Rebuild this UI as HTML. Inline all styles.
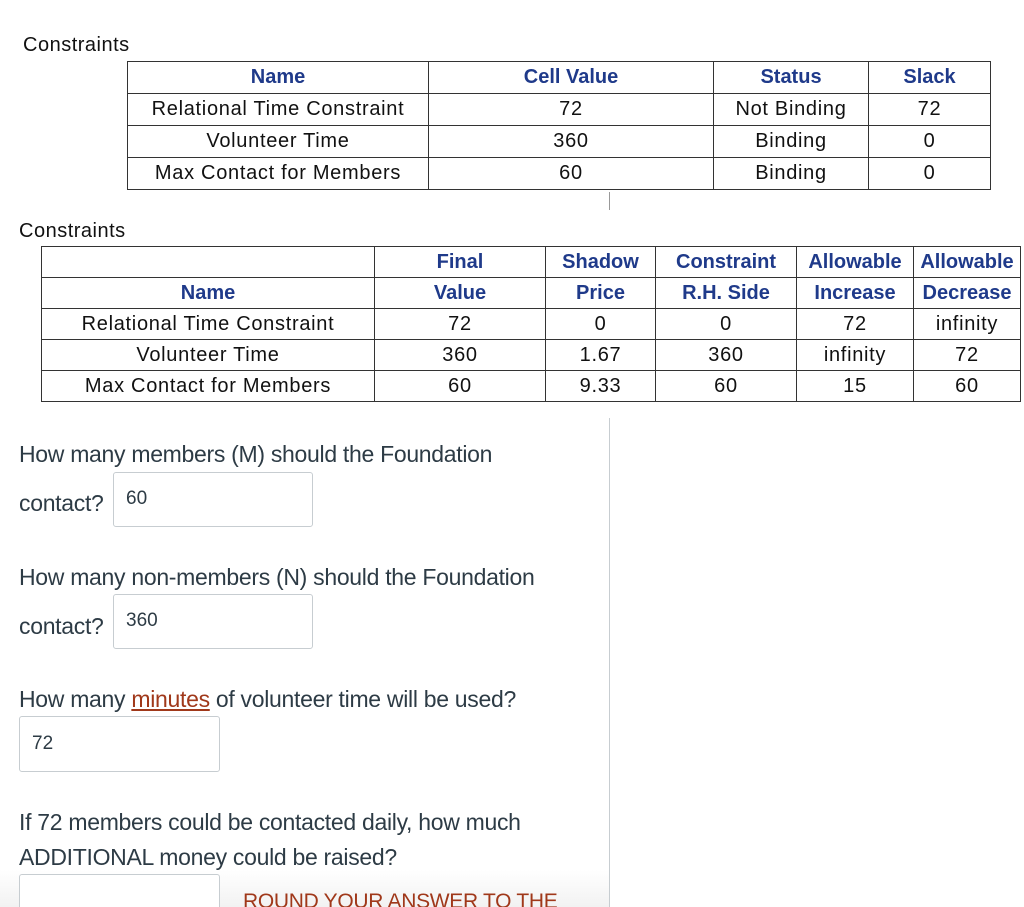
<!DOCTYPE html>
<html><head><style>
html,body{margin:0;width:1024px;height:907px;overflow:hidden}
body{background:#fff;position:relative;font-family:"Liberation Sans",sans-serif}
.a{position:absolute}
table{border-collapse:collapse;position:absolute;font-size:20px;letter-spacing:0.7px;color:#111;table-layout:fixed}
td{border:1.5px solid #333;text-align:center;padding:0;white-space:nowrap;overflow:hidden}
.h{color:#1f3a8a;font-weight:bold;letter-spacing:0}
.q{position:absolute;font-family:"Liberation Sans",sans-serif;font-size:23px;color:#2d3b45;letter-spacing:-0.3px;white-space:nowrap}
.in{position:absolute;border:1px solid #c7cdd1;border-radius:3px;background:#fff;font-size:19px;color:#2d3b45;box-sizing:border-box;padding:14px 0 0 12px}
</style></head><body>
<div class="a" style="left:23px;top:34px;font-size:20px;letter-spacing:0.5px;color:#111">Constraints</div>
<table style="left:127px;top:61px;width:864px">
<tr style="height:32px"><td class="h" style="width:300px">Name</td><td class="h" style="width:284px">Cell Value</td><td class="h" style="width:154px">Status</td><td class="h">Slack</td></tr>
<tr style="height:32px"><td>Relational Time Constraint</td><td>72</td><td>Not Binding</td><td>72</td></tr>
<tr style="height:32px"><td>Volunteer Time</td><td>360</td><td>Binding</td><td>0</td></tr>
<tr style="height:32px"><td>Max Contact for Members</td><td>60</td><td>Binding</td><td>0</td></tr>
</table>
<div class="a" style="left:609px;top:192px;width:1px;height:18px;background:#999"></div>
<div class="a" style="left:19px;top:220px;font-size:20px;letter-spacing:0.5px;color:#111">Constraints</div>
<table style="left:41px;top:246px;width:980px">
<tr style="height:31px"><td style="width:332px"></td><td class="h" style="width:170px">Final</td><td class="h" style="width:109px">Shadow</td><td class="h" style="width:140px">Constraint</td><td class="h" style="width:116px">Allowable</td><td class="h">Allowable</td></tr>
<tr style="height:31px"><td class="h">Name</td><td class="h">Value</td><td class="h">Price</td><td class="h">R.H. Side</td><td class="h">Increase</td><td class="h">Decrease</td></tr>
<tr style="height:31px"><td>Relational Time Constraint</td><td>72</td><td>0</td><td>0</td><td>72</td><td>infinity</td></tr>
<tr style="height:31px"><td>Volunteer Time</td><td>360</td><td>1.67</td><td>360</td><td>infinity</td><td>72</td></tr>
<tr style="height:31px"><td>Max Contact for Members</td><td>60</td><td>9.33</td><td>60</td><td>15</td><td>60</td></tr>
</table>
<div class="a" style="left:609px;top:418px;width:1px;height:489px;background:#c7cdd1"></div>
<div class="q" style="left:19px;top:441px">How many members (M) should the Foundation</div>
<div class="q" style="left:19px;top:490px">contact?</div>
<div class="in" style="left:113px;top:472px;width:200px;height:55px;padding-top:15px">60</div>
<div class="q" style="left:19px;top:564px">How many non-members (N) should the Foundation</div>
<div class="q" style="left:19px;top:613px">contact?</div>
<div class="in" style="left:113px;top:594px;width:200px;height:55px;padding-top:15px">360</div>
<div class="q" style="left:19px;top:686px">How many <span style="color:#a0381a;text-decoration:underline">minutes</span> of volunteer time will be used?</div>
<div class="in" style="left:19px;top:716px;width:201px;height:56px;padding-top:16px">72</div>
<div class="q" style="left:19px;top:809px">If 72 members could be contacted daily, how much</div>
<div class="q" style="left:19px;top:844px">ADDITIONAL money could be raised?</div>
<div class="a" style="left:0;top:870px;width:609px;height:37px;background:linear-gradient(#fff,#f2f2f2)"></div>
<div class="in" style="left:19px;top:874px;width:201px;height:50px"></div>
<div class="q" style="left:243px;top:890px;color:#a0381a;font-size:21px">ROUND YOUR ANSWER TO THE</div>
</body></html>
